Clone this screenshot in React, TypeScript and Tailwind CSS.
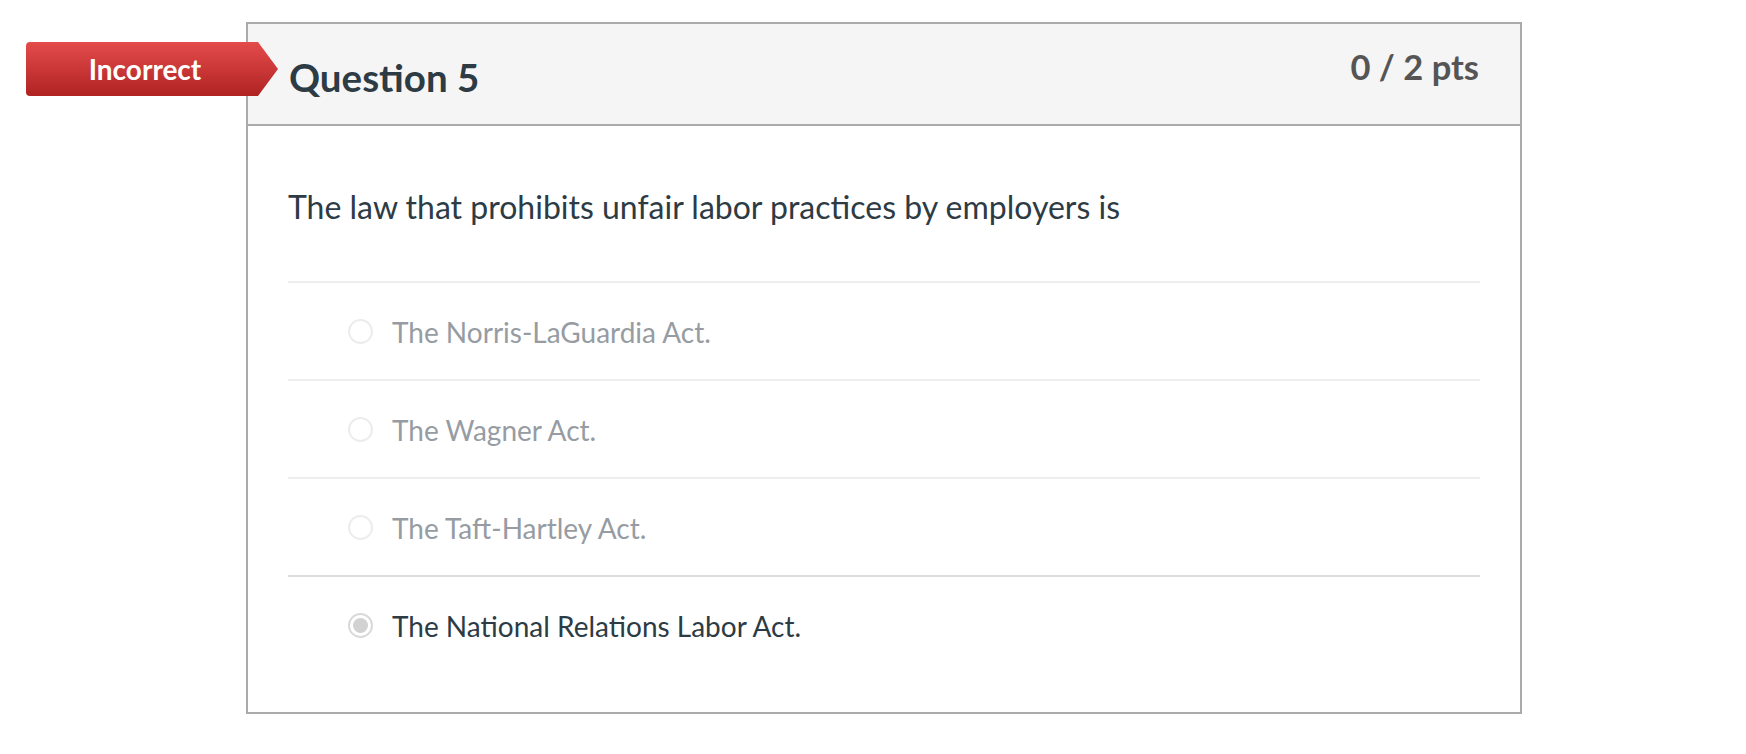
const answers = [
  { text: "The Norris-LaGuardia Act.", selected: false },
  { text: "The Wagner Act.", selected: false },
  { text: "The Taft-Hartley Act.", selected: false },
  { text: "The National Relations Labor Act.", selected: true },
];

function Radio({ selected }: { selected: boolean }) {
  if (selected) {
    return (
      <span className="flex h-[25px] w-[25px] shrink-0 items-center justify-center rounded-full border-2 border-[#d9d9d9] bg-white">
        <span className="h-[15px] w-[15px] rounded-full bg-[#d2d2d2]" />
      </span>
    );
  }
  return <span className="h-[25px] w-[25px] shrink-0 rounded-full border-2 border-[#ececec] bg-white" />;
}

export default function App() {
  return (
    <div className="relative min-h-[754px] bg-white font-['Lato','Noto_Sans',sans-serif]">
      {/* result flag, sits over the card edge */}
      <div
        className="absolute left-[26px] top-[42px] z-10 flex h-[54px] w-[252px] items-center rounded-l-[4px] bg-gradient-to-b from-[#e44b4b] to-[#b02222] pr-[20px] pl-[6px]"
        style={{ clipPath: "polygon(0 0, 232px 0, 252px 50%, 232px 100%, 0 100%)" }}
      >
        <span className="flex-1 text-center text-[28px] font-bold leading-none text-white">Incorrect</span>
      </div>

      <div className="pt-[22px] pl-[246px]">
        <div className="w-[1276px] border-2 border-[#aaaaaa]">
          <div className="flex h-[102px] items-start justify-between border-b-2 border-[#aaaaaa] bg-[#f5f5f5] px-[41px]">
            <h2 className="mt-[34px] text-[38.5px] font-bold leading-[38px] text-[#2d3b45]">Question 5</h2>
            <div className="mt-[26px] text-[34.5px] font-bold leading-[34px] text-[#555555]">0 / 2 pts</div>
          </div>

          <div className="px-[40px] pb-[39px]">
            <p className="mt-[65px] mb-[58px] text-[32px] leading-[32px] text-[#2d3b45]">
              The law that prohibits unfair labor practices by employers is
            </p>
            {answers.map((a) => (
              <div
                key={a.text}
                className={`flex h-[98px] items-center gap-[19px] border-t-2 pl-[60px] ${
                  a.selected ? "border-[#dcdcdc]" : "border-[#eeeeee]"
                }`}
              >
                <Radio selected={a.selected} />
                <span
                  className={`pt-[1px] text-[28px] leading-[28px] ${
                    a.selected ? "text-[#2d3b45]" : "text-[#969ca2]"
                  }`}
                >
                  {a.text}
                </span>
              </div>
            ))}
          </div>
        </div>
      </div>
    </div>
  );
}
